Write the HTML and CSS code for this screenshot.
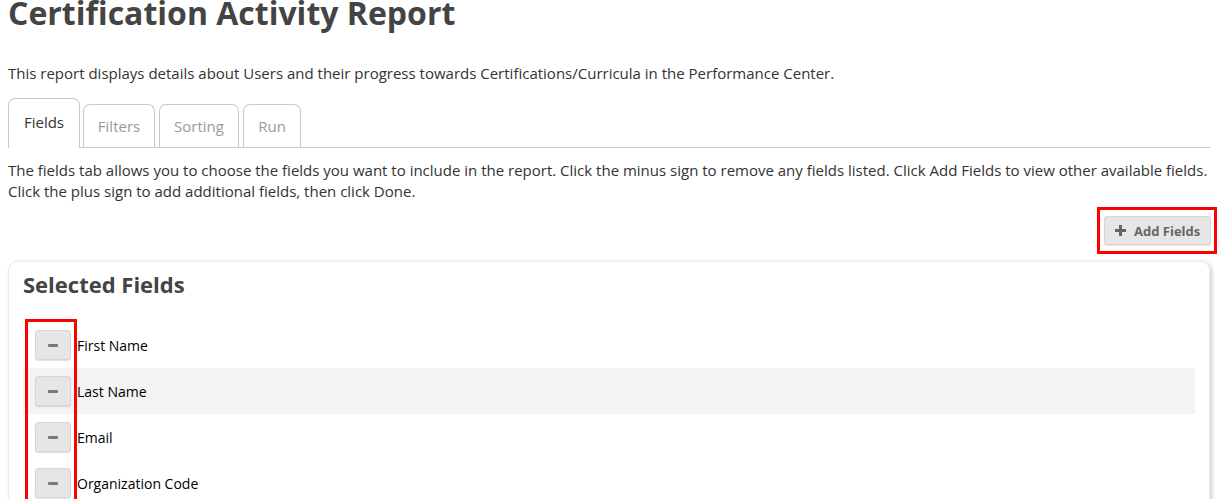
FILE: index.html
```html
<!DOCTYPE html>
<html>
<head>
<meta charset="utf-8">
<link rel="stylesheet" href="styles.css">
</head>
<body>
<h1 class="title">Certification Activity Report</h1>
<p class="intro">This report displays details about Users and their progress towards Certifications/Curricula in the Performance Center.</p>
<div class="tabs">
  <div class="tab active">Fields</div>
  <div class="tab">Filters</div>
  <div class="tab">Sorting</div>
  <div class="tab">Run</div>
</div>
<p class="help">The fields tab allows you to choose the fields you want to include in the report. Click the minus sign to remove any fields listed. Click Add Fields to view other available fields. Click the plus sign to add additional fields, then click Done.</p>
<div class="toolbar">
  <div class="mark-box">
    <button class="add-btn"><svg class="plus" width="11" height="11" viewBox="0 0 11 11"><rect x="4" y="0" width="3" height="11" fill="#666"/><rect x="0" y="4" width="11" height="3" fill="#666"/></svg>Add Fields</button>
  </div>
</div>
<div class="panel">
  <h2 class="panel-title">Selected Fields</h2>
  <div class="field-list">
    <div class="row"><button class="minus"><span class="bar"></span></button><span class="label">First Name</span></div>
    <div class="row alt"><button class="minus"><span class="bar"></span></button><span class="label">Last Name</span></div>
    <div class="row"><button class="minus"><span class="bar"></span></button><span class="label">Email</span></div>
    <div class="row"><button class="minus"><span class="bar"></span></button><span class="label">Organization Code</span></div>
    <div class="col-mark"></div>
  </div>
</div>
</body>
</html>
```

FILE: styles.css
```css
html, body {
  margin: 0;
  padding: 0;
  background: #fff;
}
body {
  padding: 0 8px;
  font-family: "Open Sans", "Noto Sans", sans-serif;
  font-size: 15px;
  color: #333;
  overflow: hidden;
}
.title {
  margin: -4px 0 0 0;
  font-size: 32px;
  line-height: 33px;
  font-weight: 700;
  color: #444;
}
.intro {
  margin: 34px 0 0 0;
  line-height: 20px;
  color: #333;
}
.tabs {
  display: flex;
  align-items: flex-end;
  gap: 3px;
  margin-top: 15px;
  border-bottom: 1px solid #c8c8c8;
  width: 1202px;
}
.tab {
  box-sizing: border-box;
  height: 43px;
  display: flex;
  align-items: center;
  justify-content: center;
  padding: 0;
  border: 1px solid #c8c8c8;
  border-bottom: none;
  border-radius: 7px 7px 0 0;
  color: #9a9a9a;
}
.tab:nth-child(2) { width: 72px; }
.tab:nth-child(3) { width: 80px; margin-left: 1px; }
.tab:nth-child(4) { width: 58px; margin-left: 1px; }
.tab.active {
  width: 72px;
  padding: 0 0 4px 0;
  height: 50px;
  color: #333;
  background: #fff;
  margin-bottom: -1px;
}
.help {
  margin: 12px 0 0 0;
  line-height: 21px;
  color: #333;
}
.toolbar {
  display: flex;
  justify-content: flex-end;
  margin-top: 5px;
  margin-right: -3px;
}
.mark-box {
  border: 3px solid #f00;
  padding: 6px 3px 6px 4px;
}
.add-btn {
  display: flex;
  align-items: center;
  box-sizing: border-box;
  height: 29px;
  width: 107px;
  padding: 0 0 0 10px;
  background: #e6e6e6;
  border: 1px solid #d6d6d6;
  border-radius: 3px;
  box-shadow: 0 1px 1px rgba(0,0,0,0.12);
  font-family: "Open Sans", "Noto Sans", sans-serif;
  font-size: 13px;
  font-weight: 700;
  color: #666;
}
.plus {
  margin-right: 8px;
}
.panel {
  box-sizing: border-box;
  width: 1202px;
  margin-top: 7px;
  padding: 7px 14px 0 14px;
  border: 1px solid #eaeaea;
  border-radius: 9px 9px 0 0;
  box-shadow: 2px 1px 4px rgba(0,0,0,0.18);
  height: 300px;
}
.panel-title {
  margin: 0;
  font-size: 22px;
  line-height: 30px;
  font-weight: 700;
  color: #444;
}
.field-list {
  position: relative;
  margin-top: 23px;
}
.row {
  display: flex;
  align-items: center;
  height: 46px;
  padding-left: 12px;
}
.row.alt {
  background: #f3f3f3;
}
.minus {
  box-sizing: border-box;
  width: 36px;
  height: 30px;
  margin: 0 6px 0 0;
  padding: 0;
  display: flex;
  align-items: center;
  justify-content: center;
  background: #e6e6e6;
  border: 1px solid #d6d6d6;
  border-radius: 3px;
  box-shadow: 0 1px 1px rgba(0,0,0,0.12);
}
.bar {
  display: block;
  width: 10px;
  height: 3px;
  background: #777;
  border-radius: 1px;
}
.label {
  color: #000;
  font-size: 14px;
}
.col-mark {
  position: absolute;
  left: 2px;
  top: -3px;
  width: 46px;
  height: 220px;
  border: 3px solid #f00;
}
```
